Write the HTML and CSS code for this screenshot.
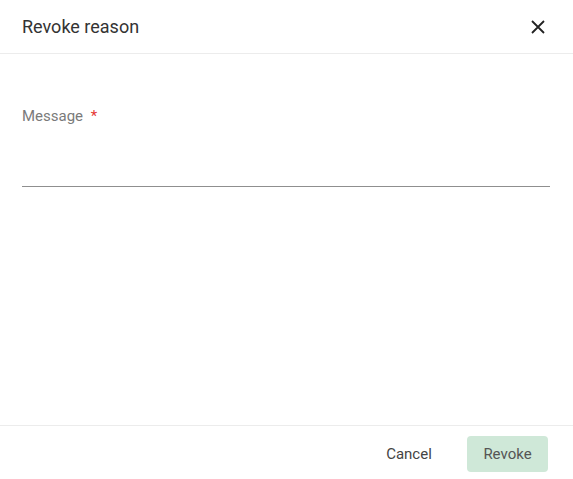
FILE: index.html
```html
<!DOCTYPE html>
<html>
<head>
<meta charset="utf-8">
<link rel="stylesheet" href="styles.css">
</head>
<body>
<div class="dialog">
  <div class="header">
    <h2 class="title">Revoke reason</h2>
    <button class="close" aria-label="Close">
      <svg width="14" height="14" viewBox="0 0 14 14"><path d="M1 1L13 13M13 1L1 13" stroke="#222" stroke-width="1.8" fill="none"/></svg>
    </button>
  </div>
  <div class="content">
    <label class="field">
      <span class="label">Message <span class="req">*</span></span>
      <span class="input"></span>
    </label>
  </div>
  <div class="footer">
    <button class="btn cancel">Cancel</button>
    <button class="btn revoke">Revoke</button>
  </div>
</div>
</body>
</html>
```
FILE: styles.css
```css
* { box-sizing: border-box; }
html, body { margin: 0; padding: 0; background: #fff; }
body { font-family: Roboto, "Noto Sans", sans-serif; }
.dialog { width: 573px; height: 479px; display: flex; flex-direction: column; }
.header { height: 54px; border-bottom: 1px solid #ececec; display: flex; align-items: center; justify-content: space-between; padding: 0 28px 0 22px; }
.title { margin: 0; font-size: 18px; font-weight: 400; color: #333; }
.close { border: 0; background: none; padding: 0; width: 14px; height: 14px; display: flex; cursor: pointer; }
.content { flex: 1; padding: 0 23px 0 22px; }
.field { display: flex; flex-direction: column; margin-top: 53px; }
.label { font-size: 15px; color: #7a7a7a; line-height: 18px; }
.req { color: #e53935; margin-left: 4px; }
.input { display: block; height: 62px; border-bottom: 1px solid #8f8f8f; }
.footer { height: 54px; border-top: 1px solid #ececec; display: flex; align-items: center; justify-content: flex-end; padding: 2px 25px 0 0; gap: 17px; }
.btn { font-family: inherit; font-size: 15px; border: 0; border-radius: 4px; height: 36px; padding: 0 16px; color: #444; background: none; }
.revoke { background: #cfe8d8; width: 81px; color: #555; }
.cancel { width: 82px; }
```
